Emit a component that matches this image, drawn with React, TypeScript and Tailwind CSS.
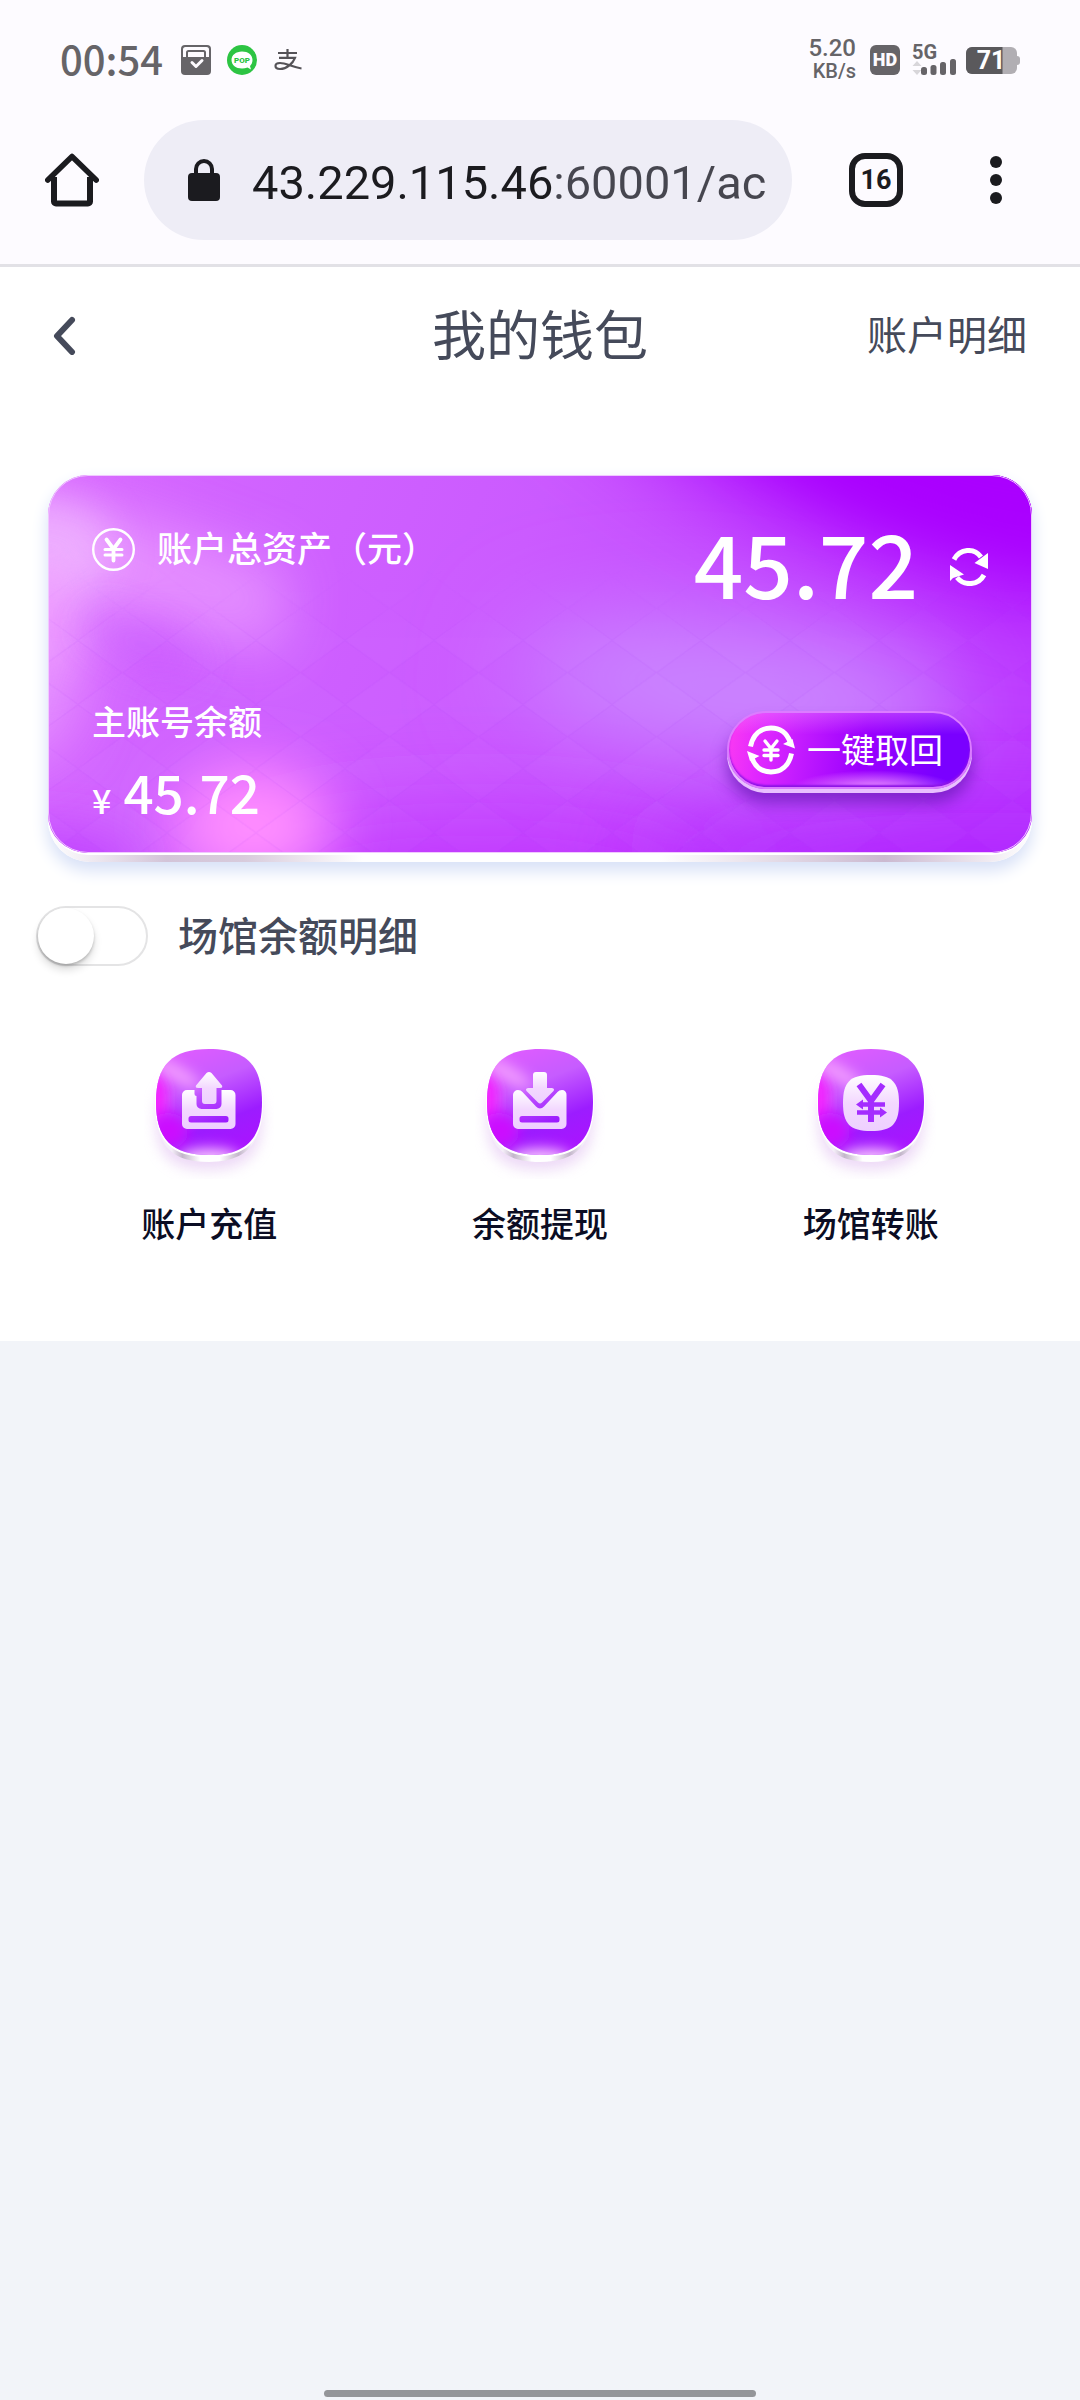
import { useState, type ReactNode } from "react";

function StatusBar() {
  return (
    <div className="flex h-[120px] items-start justify-between bg-[#fdfbff] pt-8 pr-[60px] pl-15 text-[#666468]">
      <div className="flex h-14 items-center gap-4">
        <span className="pr-0.5 pb-1 text-[40px] leading-none font-medium">00:54</span>
        <svg viewBox="0 0 30 30" className="h-[30px] w-[30px]" aria-hidden="true">
          <rect width="30" height="30" rx="4" fill="#666468" />
          <path d="M2 12V4.500a2.500 2.500 0 0 1 2.500-2.500h21A2.500 2.500 0 0 1 28 4.500V12" fill="#fdfbff" />
          <path d="M6 12V7.500A1.500 1.500 0 0 1 7.500 6h15A1.500 1.500 0 0 1 24 7.500V12" fill="none" stroke="#666468" strokeWidth="2" />
          <path d="M11 17.500l4 4 6-6" fill="none" stroke="#fdfbff" strokeWidth="3" strokeLinecap="round" strokeLinejoin="round" />
        </svg>
        <svg viewBox="0 0 30 30" className="h-[30px] w-[30px]" role="img" aria-label="POP">
          <circle cx="15" cy="15" r="15" fill="#2dc443" />
          <path d="M15 6.500c6 0 10.500 3.400 10.500 8.500 0 2.600-1 4.600-2.500 6l1 3.500-3.500-2A15 15 0 0 1 15 23.500C9 23.500 4.500 20 4.500 15S9 6.500 15 6.500z" fill="#fff" />
          <text x="15" y="18" textAnchor="middle" fontSize="8" fontWeight="900" fontFamily="Roboto, sans-serif" fill="#2dc443">POP</text>
        </svg>
        <svg viewBox="0 0 28 22" className="h-[22px] w-[30px]" fill="none" stroke="#555358" strokeWidth="2.200" aria-hidden="true">
          <path d="M4 4h19M13.500 0v8.500M5 8.800h16C19 14 13 20 6 20c-6 0-6-6 0-6 6 0 12 4 21.500 5.500" />
        </svg>
      </div>
      <div className="flex h-14 items-center">
        <div className="mr-3.5 flex flex-col items-end pb-0.5 font-[Roboto,sans-serif] font-medium">
          <span className="text-[24px] leading-6">5.20</span>
          <span className="text-[20px] leading-[22px]">KB/s</span>
        </div>
        <span className="mr-3 flex h-[30px] w-[30px] items-center justify-center rounded-md bg-[#666468] font-[Roboto,sans-serif] text-[18px] leading-none font-black text-[#fdfbff]">
          HD
        </span>
        <svg viewBox="0 -6 46 43" className="mr-2 h-[43px] w-[46px]" fill="#666468" role="img" aria-label="5G">
          <text x="0" y="14" fontSize="20" fontWeight="700" fontFamily="Roboto, sans-serif">5G</text>
          <path d="M5 16l4.500 5h-9zM5 30l4.500-5h-9z" fill="#d8d6da" />
          <rect x="9" y="22" width="6" height="8" rx="2.500" />
          <rect x="18.500" y="20" width="6" height="10" rx="2.500" />
          <rect x="28" y="17" width="6" height="13" rx="2.500" />
          <rect x="38" y="14" width="6" height="16" rx="2.500" />
        </svg>
        <svg viewBox="0 -4 54 35" className="h-[35px] w-[54px]" role="img" aria-label="71%">
          <rect width="51" height="27" rx="6" fill="#b1aeb3" />
          <path d="M50 9h1a3 3 0 0 1 3 3v3a3 3 0 0 1-3 3h-1z" fill="#b1aeb3" />
          <path d="M6 0h30.500v27H6a6 6 0 0 1-6-6V6a6 6 0 0 1 6-6z" fill="#5a595c" />
          <text x="25" y="22" textAnchor="middle" fontSize="25" fontWeight="700" fontFamily="Roboto, sans-serif" fill="#fff">71</text>
        </svg>
      </div>
    </div>
  );
}

function BrowserBar() {
  return (
    <div className="flex items-center border-b-3 border-[#e2e1e6] bg-[#fdfbff] pr-[78px] pb-6 pl-[45px]">
      <button type="button" aria-label="主页" className="h-[54px] w-[54px] shrink-0">
        <svg viewBox="0 0 54 54" fill="none" stroke="#1b1b1f" strokeLinejoin="round">
          <path d="M9 24v24.500a2 2 0 0 0 2 2h32a2 2 0 0 0 2-2V24" strokeWidth="6" />
          <path d="M2.800 27L27 3.500 51.200 27" strokeWidth="5.500" strokeLinecap="round" />
        </svg>
      </button>
      <div className="mr-[57px] ml-[45px] flex h-[120px] min-w-0 flex-1 items-center rounded-full bg-[#eeedf6] pr-6 pl-11">
        <svg viewBox="0 0 32 42" className="mr-8 h-[42px] w-8 shrink-0" aria-hidden="true">
          <rect y="14" width="32" height="28" rx="4" fill="#1b1b1f" />
          <path d="M8 16V10a8 8 0 0 1 16 0v6" fill="none" stroke="#1b1b1f" strokeWidth="4" />
        </svg>
        <input
          type="text"
          aria-label="网址"
          defaultValue="43.229.115.46:60001/ac"
          className="h-20 w-0 min-w-0 flex-1 bg-[linear-gradient(90deg,#1b1b1f_302px,#46464f_302px)] bg-clip-text pt-1 font-[Roboto,sans-serif] text-[47px] leading-none text-transparent outline-none"
        />
      </div>
      <button
        type="button"
        aria-label="标签页"
        className="flex h-[54px] w-[54px] shrink-0 items-center justify-center rounded-2xl border-6 border-[#1b1b1f] font-[Roboto,sans-serif] text-[27px] leading-none font-bold text-[#1b1b1f]"
      >
        16
      </button>
      <button type="button" aria-label="更多" className="ml-[87px] flex w-3 shrink-0 flex-col gap-1.5">
        <i className="h-3 rounded-full bg-[#1b1b1f]" />
        <i className="h-3 rounded-full bg-[#1b1b1f]" />
        <i className="h-3 rounded-full bg-[#1b1b1f]" />
      </button>
    </div>
  );
}

function CardTexture() {
  return (
    <svg viewBox="0 0 984 377" preserveAspectRatio="none" className="absolute inset-0 h-full w-full" aria-hidden="true">
      <defs>
        <linearGradient id="base" x1="0" x2="1" y1="0" y2="0.15">
          <stop offset="0" stopColor="#d868ff" />
          <stop offset="0.25" stopColor="#cf62ff" />
          <stop offset="0.5" stopColor="#cb5aff" />
          <stop offset="1" stopColor="#bc38ff" />
        </linearGradient>
        <filter id="b20" filterUnits="userSpaceOnUse" x="-200" y="-200" width="1400" height="800"><feGaussianBlur stdDeviation="20" /></filter>
        <filter id="b30" filterUnits="userSpaceOnUse" x="-200" y="-200" width="1400" height="800"><feGaussianBlur stdDeviation="29" /></filter>
        <filter id="b50" filterUnits="userSpaceOnUse" x="-300" y="-300" width="1600" height="1000"><feGaussianBlur stdDeviation="50" /></filter>
        <pattern id="diamonds" x="30" y="5" width="89" height="64" patternUnits="userSpaceOnUse">
          <path d="M0 32L44.500 0L89 32L44.500 64z" fill="#fff" fillOpacity="0.02" stroke="#a030e8" strokeOpacity="0.08" strokeWidth="1.500" />
        </pattern>
        <linearGradient id="fade" x1="0" x2="0" y1="0" y2="1">
          <stop offset="0.25" stopColor="#000" />
          <stop offset="0.45" stopColor="#fff" />
        </linearGradient>
        <mask id="fadeMask"><rect width="984" height="377" fill="url(#fade)" /></mask>
      </defs>
      <rect width="984" height="377" fill="url(#base)" />
      <ellipse cx="430" cy="410" rx="260" ry="60" fill="#c030ff" filter="url(#b50)" />
      <ellipse cx="930" cy="390" rx="330" ry="70" fill="#ae22ff" filter="url(#b50)" opacity="0.8" />
      <ellipse cx="690" cy="215" rx="230" ry="70" fill="#ca88ff" filter="url(#b50)" transform="rotate(6 690 215)" />
      <path d="M500 -140H1180V150C1000 120 720 90 500 -140z" fill="#a800ff" filter="url(#b50)" />
      <path d="M620 -120H1120V70C980 90 780 60 620 -120z" fill="#aa00ff" filter="url(#b30)" />
      <path d="M-60 10C30 15 110 50 240 95L230 180C120 150 70 120 40 180L20 270L-80 300z" fill="#e896ff" filter="url(#b30)" opacity="0.85" />
      <ellipse cx="-5" cy="75" rx="70" ry="50" fill="#f2c0ff" filter="url(#b20)" opacity="0.65" />
      <ellipse cx="-5" cy="140" rx="28" ry="60" fill="#f2a0ff" filter="url(#b20)" opacity="0.65" />
      <ellipse cx="95" cy="170" rx="60" ry="14" fill="#c654ff" filter="url(#b20)" transform="rotate(25 95 170)" opacity="0.8" />
      <ellipse cx="205" cy="350" rx="80" ry="60" fill="#ff8cff" filter="url(#b30)" />
      <ellipse cx="0" cy="390" rx="90" ry="40" fill="#c246ff" filter="url(#b20)" />
      <rect width="984" height="377" fill="url(#diamonds)" mask="url(#fadeMask)" />
    </svg>
  );
}

function BalanceCard() {
  return (
    <section className="mx-12 rounded-[42px] bg-[linear-gradient(90deg,#fff,#d3c4d8_12%,#d8cbdc_20%,#fff_32%,#fff_62%,#cbb9d0_85%,#fff)] pb-[7px] shadow-[0_8px_16px_1px_#d8e1f7]">
      <div className="relative overflow-hidden rounded-[40px] border-b-2 border-white text-white">
        <CardTexture />
        <div className="absolute inset-0 rounded-[40px] border border-[#f0c8ff]" />
        <div className="relative flex h-[378px] flex-col justify-between px-11 pt-12 pb-[21px]">
          <div className="flex items-start justify-between">
            <div className="flex items-center gap-[22px] pt-1">
              <svg viewBox="0 0 43 43" className="h-[43px] w-[43px]" fill="none" stroke="#fff" strokeLinecap="round" aria-hidden="true">
                <circle cx="21.500" cy="21.500" r="20.300" strokeWidth="2.400" />
                <path d="M14.500 11.500l7 9.500 7-9.500M21.500 21v11.500" strokeWidth="3.800" />
                <path d="M13 21.500h17M13 27h17" strokeWidth="3" />
              </svg>
              <h2 className="pb-1 text-[35px] leading-10 font-medium">账户总资产（元）</h2>
            </div>
            <div className="flex items-center gap-8">
              <strong className="pb-3 text-[87px] leading-[76px] font-medium">45.72</strong>
              <button type="button" aria-label="刷新" className="h-[38px] w-[38px]">
                <svg viewBox="0 0 38 38" fill="none" stroke="#fff" strokeWidth="5">
                  <path d="M4 11.500C10 .5 24-.5 31 9" />
                  <path d="M34 27C28 38 14 38 7 29.500" />
                  <path d="M38 5v16l-13.500-6z M0 17v16l3-3 11-3.500z" fill="#fff" stroke="none" />
                </svg>
              </button>
            </div>
          </div>
          <div className="flex items-start justify-between">
            <div>
              <p className="text-[34px] leading-[44px] font-medium">主账号余额</p>
              <p className="mt-4 flex items-baseline gap-3 leading-[64px] font-medium">
                <span className="text-[34px]">¥</span>
                <span className="text-[53px]">45.72</span>
              </p>
            </div>
            <button
              type="button"
              className="mt-3 mr-4 flex h-[78px] items-center gap-3 rounded-full border-2 border-[#dc7cff] bg-[radial-gradient(ellipse_34%_24%_at_60%_100%,#f29cff,#f29cff00),linear-gradient(180deg,#f08cff66,#f08cff00_30%),linear-gradient(100deg,#ff3cf0,#e128ff_15%,#c41cff_30%,#9c00ff_55%,#7a00ff_85%)] bg-origin-border pr-[27px] pl-[18px] shadow-[inset_0_-2px_2px_#8c14e6,0_4px_0_#e9c0ff,0_14px_16px_#6414b4b0]"
            >
              <svg viewBox="0 0 48 50" className="h-[50px] w-12" fill="none" stroke="#fff" aria-hidden="true">
                <path d="M3.500 21.500C6 9 14 3 24 3c9 0 16 5 19 14" strokeWidth="5" />
                <path d="M44.500 28.500C42 41 34 47 24 47 15 47 8 42 5 33" strokeWidth="5" />
                <path d="M48 23.500l-12-4.500 9.500-5zM0 26l12.500 5-9.500 5z" fill="#fff" stroke="none" />
                <path d="M18 16l6 7.500 6-7.500M24 23v12M17 25h14M17 30.500h14" strokeWidth="3.400" strokeLinecap="round" />
              </svg>
              <span className="pb-0.5 text-[34px] leading-none">一键取回</span>
            </button>
          </div>
        </div>
      </div>
    </section>
  );
}

function VenueSwitch() {
  const [on, setOn] = useState(false);
  return (
    <label className="mt-11 ml-9 flex w-fit items-start gap-[30px] text-[40px] leading-14 font-medium text-[#454a5a]">
      <span className="relative block h-[60px] w-28">
        <input
          type="checkbox"
          role="switch"
          checked={on}
          onChange={() => setOn(!on)}
          className="peer block h-full w-full appearance-none rounded-full border-2 border-[#e4e4e5] bg-white checked:bg-[#b52bff]"
        />
        <span className="pointer-events-none absolute top-0.5 left-0.5 h-14 w-14 rounded-full bg-white shadow-[0_6px_8px_#00000024,0_2px_3px_#00000030] peer-checked:left-[54px]" />
      </span>
      <span>场馆余额明细</span>
    </label>
  );
}

function ActionTile({ label, children, id }: { label: string; id: string; children: ReactNode }) {
  return (
    <button type="button" className="flex flex-col items-center gap-[22px] text-[34px] leading-11 font-medium text-[#0b0d24]">
      <svg viewBox="0 0 130 140" className="h-[140px] w-[130px]" aria-hidden="true">
        <defs>
          <linearGradient id={`${id}-bg`} x1="0.300" y1="0" x2="0.700" y2="1">
            <stop offset="0" stopColor="#e45cff" />
            <stop offset="0.35" stopColor="#c65cff" />
            <stop offset="0.65" stopColor="#9c1cff" />
            <stop offset="1" stopColor="#b010ff" />
          </linearGradient>
          <linearGradient id={`${id}-glyph`} x1="0" y1="0" x2="0" y2="1">
            <stop offset="0" stopColor="#fff" />
            <stop offset="0.500" stopColor="#f3d8ff" />
            <stop offset="1" stopColor="#eed0ff" />
          </linearGradient>
          <linearGradient id={`${id}-lip`} x1="0" y1="0" x2="1" y2="0">
            <stop offset="0.150" stopColor="#f4eef8" />
            <stop offset="0.250" stopColor="#c3b6ca" />
            <stop offset="0.420" stopColor="#fff" />
            <stop offset="0.600" stopColor="#fff" />
            <stop offset="0.780" stopColor="#c3b6ca" />
            <stop offset="0.900" stopColor="#f4eef8" />
          </linearGradient>
          <filter id={`${id}-soft`} x="-100%" y="-100%" width="300%" height="300%"><feGaussianBlur stdDeviation="7" /></filter>
          <clipPath id={`${id}-clip`}><path d="M65 10C102 10 118 26 118 63s-16 53-53 53-53-16-53-53S28 10 65 10z" /></clipPath>
        </defs>
        <path d="M65 34C102 34 118 50 118 81s-14 50-53 50-53-16-53-50 14-47 53-47z" fill="#dcb4ee" opacity="0.500" filter={`url(#${id}-soft)`} />
        <path d="M65 18C102 18 118 34 118 69s-16 54-53 54-53-16-53-54S28 18 65 18z" fill={`url(#${id}-lip)`} />
        <path d="M65 10C102 10 119 26 119 64s-16 54-54 54-54-16-54-54S28 10 65 10z" fill="#fff" />
        <g clipPath={`url(#${id}-clip)`}>
          <rect width="130" height="130" fill={`url(#${id}-bg)`} />
          <ellipse cx="10" cy="60" rx="14" ry="30" fill="#f420ff" filter={`url(#${id}-soft)`} />
          <ellipse cx="24" cy="92" rx="20" ry="18" fill="#cc10ff" filter={`url(#${id}-soft)`} />
          <ellipse cx="32" cy="34" rx="28" ry="7" fill="#f5a4ff" filter={`url(#${id}-soft)`} transform="rotate(30 32 34)" />
          <ellipse cx="65" cy="119" rx="30" ry="9" fill="#fbd0ff" filter={`url(#${id}-soft)`} />
        </g>
        <g fill={`url(#${id}-glyph)`}>{children}</g>
      </svg>
      <span>{label}</span>
    </button>
  );
}

function Actions() {
  return (
    <div className="mt-[73px] grid grid-cols-3 px-11">
      <ActionTile id="deposit" label="账户充值">
        <path
          fillRule="evenodd"
          d="M43 51h7.500v4a2 2 0 0 0 2 2v8a5 5 0 0 0 5 5h15a5 5 0 0 0 5-5v-14h9a5 5 0 0 1 5 5V85a5 5 0 0 1-5 5H43a5 5 0 0 1-5-5V56a5 5 0 0 1 5-5zM47 77a2.500 2.500 0 0 0-2.500 2.500v1.500a2.500 2.500 0 0 0 2.500 2.500h35a2.500 2.500 0 0 0 2.500-2.500v-1.500a2.500 2.500 0 0 0-2.500-2.500z"
        />
        <path d="M62.500 34Q65 32 67.500 34L78 46.500Q79 49 76 49H72.500V62a3 3 0 0 1-3 3h-8.500a3 3 0 0 1-3-3V49h-4Q51 49 52 46.500z" />
      </ActionTile>
      <ActionTile id="withdraw" label="余额提现">
        <path
          fillRule="evenodd"
          d="M43 51q3 0 4.500 2l13.500 14.500q4 4 8 0L82.500 53q1.500-2 4.500-2a4.500 4.500 0 0 1 4.500 5V85a5 5 0 0 1-5 5H43a5 5 0 0 1-5-5V56a5 5 0 0 1 5-5zM47 77a2.500 2.500 0 0 0-2.500 2.500v1.500a2.500 2.500 0 0 0 2.500 2.500h35a2.500 2.500 0 0 0 2.500-2.500v-1.500a2.500 2.500 0 0 0-2.500-2.500z"
        />
        <path d="M61 33h8a3 3 0 0 1 3 3v13h5q3 .5 1.500 3L67 63.500q-2 2-4 0L51.500 52q-1.500-2.500 1.500-3H58V36a3 3 0 0 1 3-3z" />
      </ActionTile>
      <ActionTile id="transfer" label="场馆转账">
        <path d="M65 36C86 36 93 43 93 64S86 92 65 92 37 85 37 64s7-28 28-28z" />
        <g fill="none" stroke="#a42cff">
          <path d="M53 45.500L65 62L77 45.500M65 61V83" strokeWidth="6" />
          <path d="M54 65.500h25M51 73.500h23" strokeWidth="4.500" />
        </g>
        <path d="M50 65.500l7-5v10zM81 73.500l-7-5v10z" fill="#a42cff" />
      </ActionTile>
    </div>
  );
}

export default function App() {
  return (
    <div className="flex min-h-screen flex-col bg-[#f2f4f9] font-['Noto_Sans_CJK_SC',sans-serif]">
      <StatusBar />
      <BrowserBar />
      <main className="bg-white pb-24">
        <header className="mb-[72px] grid h-[136px] grid-cols-3 items-center px-[53px] text-[#454a5a]">
          <button type="button" aria-label="返回" className="h-10 w-6">
            <svg viewBox="0 0 24 40" fill="none" stroke="#454a5a" strokeWidth="6" strokeLinecap="round" strokeLinejoin="round">
              <path d="M19 5L4 21l15 16" />
            </svg>
          </button>
          <h1 className="pb-1 text-center text-[54px] leading-none">我的钱包</h1>
          <a href="#details" className="justify-self-end pb-1 text-[40px] leading-none">账户明细</a>
        </header>
        <BalanceCard />
        <VenueSwitch />
        <Actions />
      </main>
      <div className="mx-auto mt-auto mb-[3px] h-[7px] w-[432px] rounded-full bg-[#949599]" />
    </div>
  );
}
